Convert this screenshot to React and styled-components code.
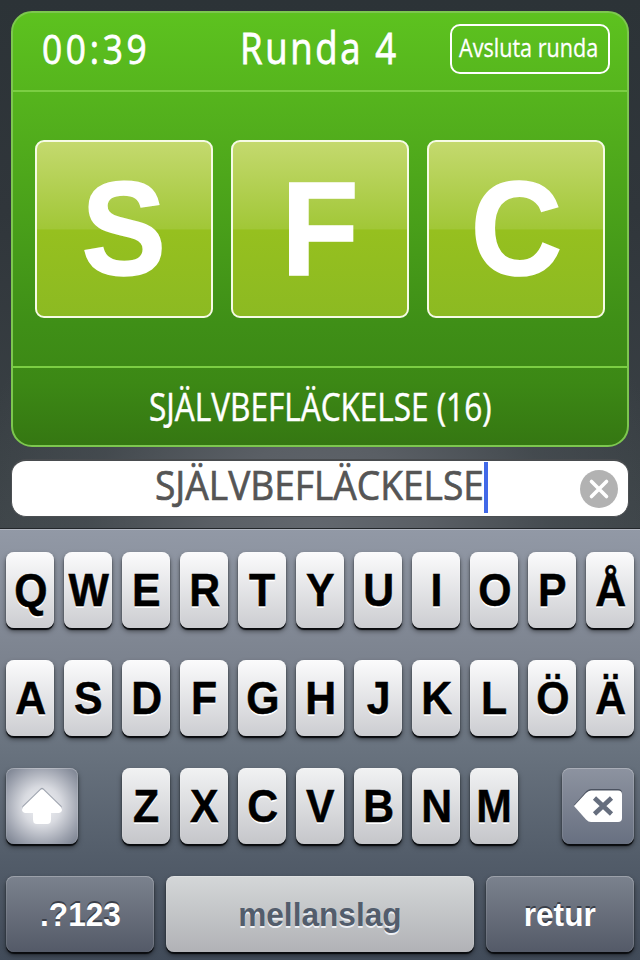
import React from "react";
import styled, { createGlobalStyle } from "styled-components";

const Global = createGlobalStyle`
  * { box-sizing: border-box; }
  body { margin: 0; background: #2d3439; }
`;

const Screen = styled.main`
  width: 640px;
  height: 960px;
  overflow: hidden;
  display: flex;
  flex-direction: column;
  font-family: "Liberation Sans", Arial, sans-serif;
`;

const Game = styled.section`
  height: 528px;
  padding: 11px 11px 0;
  background:
    radial-gradient(ellipse 360px 330px at 320px 540px, #63686f 0%, #5a5f65 30%, rgba(74, 80, 85, 0.6) 65%, rgba(60, 66, 71, 0) 100%),
    linear-gradient(#2c3337, #30363b 40%, #3d4448);
`;

const Panel = styled.div`
  height: 436px;
  border: 2px solid #7dc74f;
  border-radius: 21px;
  background: linear-gradient(#5dc21f 0, #51ac1c 130px, #3f8f17 310px, #3c8815 370px, #357712 432px);
  display: flex;
  flex-direction: column;
`;

const Header = styled.header`
  height: 79px;
  border-bottom: 2px solid #7bce43;
  display: grid;
  grid-template-columns: 208px 200px 1fr;
`;

const Slot = styled.div`
  display: flex;
  align-items: flex-start;
  justify-content: ${(p) => p.$justify || "center"};
  padding: ${(p) => p.$pad || "0"};
`;

const Label = styled.span`
  display: block;
  white-space: pre;
  font-family: "Open Sans", "Noto Sans", sans-serif;
  font-size: ${(p) => p.$size}px;
  line-height: ${(p) => p.$line || 50}px;
  letter-spacing: ${(p) => p.$spacing || 0}px;
  color: ${(p) => p.$color || "#fff"};
  -webkit-text-stroke: ${(p) => p.$stroke ?? 0.5}px currentColor;
  transform: translateY(${(p) => p.$dy || 0}px) scaleX(${(p) => p.$stretch || 1});
  transform-origin: ${(p) => p.$origin || "left"} center;
`;

const EndButton = styled.button`
  width: 160px;
  height: 50px;
  margin: 11px 0 0 16px;
  padding: 0 0 0 7px;
  border: 2px solid #fff;
  border-radius: 10px;
  background: transparent;
  display: flex;
  align-items: center;
`;

const Tiles = styled.div`
  height: 274px;
  padding: 48px 22px 0;
  display: flex;
  gap: 18px;
`;

const Tile = styled.div`
  width: 178px;
  height: 178px;
  border: 2px solid #f6fbe6;
  border-radius: 9px;
  background: linear-gradient(#c4d96e 0, #a1c737 50%, #96c01f 50.5%, #8cba22 100%);
  display: flex;
  align-items: center;
  justify-content: center;
  color: #fff;
  font-size: 134px;
  font-weight: bold;
  line-height: 174px;
  -webkit-text-stroke: 1.5px #fff;
`;

const Glyph = styled.span`
  display: block;
  transform: translateY(${(p) => p.$dy || 0}px) scaleX(${(p) => p.$stretch || 1});
`;

const Result = styled.div`
  flex: 1;
  border-top: 2px solid #7bce43;
  display: flex;
  justify-content: center;
  padding-top: 13px;
`;

const Field = styled.div`
  width: 618px;
  height: 58px;
  margin-top: 12px;
  border: 1px solid #4b4f52;
  border-top: 2px solid #494c4f;
  border-radius: 15px;
  background: #fff;
  display: grid;
  grid-template-columns: 143px 329px 4px 1fr;
`;

const Caret = styled.div`
  width: 4px;
  height: 51px;
  margin-top: 1px;
  background: #4169e8;
`;

const Clear = styled.button`
  justify-self: end;
  width: 38px;
  height: 38px;
  margin: 9px 10px 0 0;
  padding: 0;
  border: 0;
  background: none;
`;

const Keyboard = styled.section`
  height: 432px;
  border-top: 1px solid #23272b;
  box-shadow: inset 0 1px #b0b5bf;
  padding: 23px 6px 0;
  background: linear-gradient(#9299a6, #7c838f 30%, #68727e 52%, #535d6a 76%, #414b59);
  display: flex;
  flex-direction: column;
  gap: 32px;
`;

const Row = styled.div`
  height: 76px;
  display: flex;
  gap: ${(p) => p.$gap || 10}px;
`;

const Letters = styled.div`
  display: flex;
  gap: 10px;
  margin: 0 auto;
`;

const tones = {
  light: "linear-gradient(#fbfbfc, #cccdd1)",
  lower: "linear-gradient(#f1f2f3, #c5c6ca)",
  space: "linear-gradient(#d4d7d8, #b1b2b6)",
  dark: "linear-gradient(#7b828e, #545a68)",
  mid: "linear-gradient(#8d93a0, #687081)",
  shift: "radial-gradient(ellipse 48px 49px at 50% 50%, #f4f5f8 0%, #d8dae0 40%, #9ea3af 78%, #7f8694 100%)",
};

const Key = styled.button`
  width: ${(p) => p.$width || 48}px;
  height: 76px;
  flex: none;
  padding: 0;
  border: 0;
  border-radius: 8px;
  background: ${(p) => tones[p.$tone]};
  box-shadow:
    0 2px 1px #090b0e,
    0 3px 5px rgba(0, 0, 0, 0.5),
    inset 0 1px rgba(255, 255, 255, 0.25),
    inset 1px 0 rgba(255, 255, 255, 0.1),
    inset -1px 0 rgba(255, 255, 255, 0.15);
  color: #000;
  font: bold 46px/76px "Liberation Sans", Arial, sans-serif;
  text-shadow: 0 2px #fff;
  display: flex;
  align-items: center;
  justify-content: center;
  overflow: visible;
`;

const Word = styled(Glyph)`
  color: ${(p) => p.$color};
  font-size: ${(p) => p.$size}px;
  text-shadow: ${(p) => p.$shadow};
`;

const Char = styled(Glyph)`
  padding-left: 1px;
  -webkit-text-stroke: 0.5px #000;
`;

const LetterKey = ({ char, tone = "light" }) => (
  <Key $tone={tone}>
    <Char $stretch={0.93}>{char}</Char>
  </Key>
);

const ShiftIcon = () => (
  <svg width="44" height="40" viewBox="0 0 44 40">
    <path d="M20.500 2.500Q22 1.200 23.500 2.500L41.500 20Q43 24 39 25H31V33Q31 37 27 37H17Q13 37 13 33V25H5Q1 24 2.500 20Z" fill="#858b99" opacity=".7" />
    <path d="M20.500 4Q22 2.700 23.500 4L41.500 21.500Q43 26 39 27H31V34Q31 38 27 38H17Q13 38 13 34V27H5Q1 26 2.500 21.500Z" fill="#fff" />
  </svg>
);

const BackspaceIcon = () => (
  <svg width="50" height="36" viewBox="0 0 50 36">
    <path d="M1 17L13.500 3Q16 1 18 1H45Q49 1 49 5V29H13Z" fill="#4b5260" />
    <path d="M1 18L13 5Q15.500 2.500 18 2.500H45Q49 2.500 49 6.500V30Q49 34 45 34H18Q15.500 34 13 31.500Z" fill="#fff" />
    <path d="M21.500 10L38.500 26M38.500 10L21.500 26" stroke="#666e7e" strokeWidth="4.600" />
  </svg>
);

export default function App() {
  return (
    <Screen>
      <Global />
      <Game>
        <Panel>
          <Header>
            <Slot $justify="flex-start" $pad="10px 0 0 29px">
              <Label $size={41} $stretch={0.86} $spacing={4.3} $stroke={0.8}>00:39</Label>
            </Slot>
            <Slot $justify="flex-start" $pad="10px 0 0 19px">
              <Label $size={43} $stretch={0.85} $spacing={3.1} $stroke={0.8}>Runda 4</Label>
            </Slot>
            <Slot $justify="flex-start" $pad="0 0 0 13px">
              <EndButton>
                <Label $size={26} $line={46} $stretch={0.83} $dy={-2} $stroke={0.3}>Avsluta runda</Label>
              </EndButton>
            </Slot>
          </Header>
          <Tiles>
            {["S", "F", "C"].map((c) => (
              <Tile key={c}><Glyph $stretch={0.945}>{c}</Glyph></Tile>
            ))}
          </Tiles>
          <Result>
            <Label $size={38} $stretch={0.83} $origin="center">SJÄLVBEFLÄCKELSE (16)</Label>
          </Result>
        </Panel>
        <Field>
          <span />
          <Label $size={41} $stretch={0.905} $dy={-2} $stroke={0.7} $color="#555">SJÄLVBEFLÄCKELSE</Label>
          <Caret />
          <Clear>
            <svg width="38" height="38" viewBox="0 0 38 38">
              <circle cx="19" cy="19" r="19" fill="#b2b2b2" />
              <path d="M11.500 11.500L26.500 26.500M26.500 11.500L11.500 26.500" stroke="#fff" strokeWidth="3.600" strokeLinecap="round" />
            </svg>
          </Clear>
        </Field>
      </Game>
      <Keyboard>
        <Row>{[..."QWERTYUIOPÅ"].map((c) => <LetterKey key={c} char={c} />)}</Row>
        <Row>{[..."ASDFGHJKLÖÄ"].map((c) => <LetterKey key={c} char={c} />)}</Row>
        <Row>
          <Key $width={72} $tone="shift"><ShiftIcon /></Key>
          <Letters>{[..."ZXCVBNM"].map((c) => <LetterKey key={c} char={c} tone="lower" />)}</Letters>
          <Key $width={72} $tone="mid"><BackspaceIcon /></Key>
        </Row>
        <Row $gap={12}>
          <Key $width={148} $tone="dark">
            <Word $size={34} $stretch={0.93} $color="#fff" $shadow="0 -2px #3a3f49">.?123</Word>
          </Key>
          <Key $width={308} $tone="space">
            <Word $size={34} $stretch={0.93} $color="#535d6c" $shadow="0 2px #eef0f4">mellanslag</Word>
          </Key>
          <Key $width={148} $tone="dark">
            <Word $size={34} $stretch={0.93} $color="#fff" $shadow="0 -2px #3a3f49">retur</Word>
          </Key>
        </Row>
      </Keyboard>
    </Screen>
  );
}
